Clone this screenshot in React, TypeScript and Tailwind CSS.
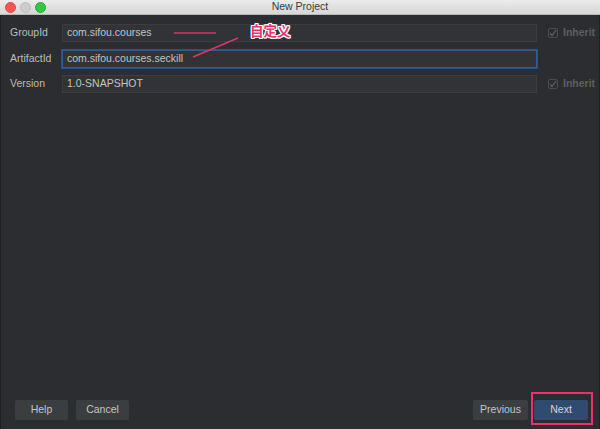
import React from "react";

const font = { fontFamily: '"Liberation Sans", Arial, sans-serif' };

function Row({ label, value, focused, inherit }: { label: string; value: string; focused?: boolean; inherit?: boolean }) {
  return (
    <div className="flex items-center h-[18px]">
      <div className="w-[61px] pl-[9px] text-[10.5px] text-[#bdbdbd]">{label}</div>
      <div
        className={
          "w-[475px] h-[18px] flex items-center pl-[4px] text-[10.5px] text-[#c4c4c4] bg-[#313336] border " +
          (focused ? "border-[#2e5f94] ring-1 ring-[#2a527e]" : "border-[#3b3d40]")
        }
      >
        {value}
      </div>
      {inherit && (
        <div className="flex items-center ml-[11px] gap-[5px]">
          <div className="w-[10px] h-[10px] border border-[#4a4c4f] rounded-[2px] flex items-center justify-center">
            <svg width="8" height="8" viewBox="0 0 8 8">
              <path d="M1 4.2 L3 6.5 L7 1" stroke="#5f6164" strokeWidth="1.2" fill="none" />
            </svg>
          </div>
          <span className="text-[10.5px] font-bold text-[#5d5f62]">Inherit</span>
        </div>
      )}
    </div>
  );
}

export default function App() {
  return (
    <div className="relative w-[600px] h-[429px] flex flex-col bg-[#2b2d30] overflow-hidden" style={font}>
      <div className="relative h-[15px] bg-gradient-to-b from-[#ececec] to-[#d6d6d6] border-b border-[#b9b9b9] flex items-center">
        <div className="absolute left-[5px] top-[2px] flex gap-[4px]">
          <div className="w-[11px] h-[11px] rounded-full bg-[#fc5753] border border-[#df4744]" />
          <div className="w-[11px] h-[11px] rounded-full bg-[#cdcdcd] border border-[#bdbdbd]" />
          <div className="w-[11px] h-[11px] rounded-full bg-[#33c748] border border-[#27aa35]" />
        </div>
        <div className="w-full text-center text-[10.5px] text-[#3a3a3a]">New Project</div>
      </div>
      <div className="flex-1 flex flex-col border-x border-[#1f2022]">
        <div className="flex flex-col gap-[7.5px] pt-[9px]">
          <Row label="GroupId" value="com.sifou.courses" inherit />
          <Row label="ArtifactId" value="com.sifou.courses.seckill" focused />
          <Row label="Version" value="1.0-SNAPSHOT" inherit />
        </div>
        <div className="flex-1" />
        <div className="flex items-center justify-between pl-[14px] pr-[11px] pb-[9px]">
          <div className="flex gap-[8px]">
            <button className="w-[53px] h-[20px] bg-[#3b3e41] rounded-[2px] text-[10.5px] text-[#c4c4c4]">Help</button>
            <button className="w-[53px] h-[20px] bg-[#3b3e41] rounded-[2px] text-[10.5px] text-[#c4c4c4]">Cancel</button>
          </div>
          <div className="flex gap-[6px]">
            <button className="w-[55px] h-[20px] bg-[#3b3e41] rounded-[2px] text-[10.5px] text-[#c4c4c4]">Previous</button>
            <button className="w-[54px] h-[20px] bg-[#2f4c70] rounded-[2px] text-[10.5px] text-[#d6d6d6]">Next</button>
          </div>
        </div>
      </div>
      <div className="absolute left-[531px] top-[392px] w-[62px] h-[33px] border-[2.5px] border-[#e8336d]" />
      <svg className="absolute left-0 top-0" width="600" height="429">
        <line x1="174" y1="33" x2="216" y2="33" stroke="#e2336a" strokeWidth="1.5" />
        <line x1="238" y1="38" x2="193" y2="57" stroke="#e2336a" strokeWidth="1.5" />
      </svg>
      <div
        className="absolute left-[250px] top-[22px] text-[13.5px] font-bold text-[#e8336d]"
        style={{
          fontFamily: '"Noto Sans CJK SC", sans-serif',
          lineHeight: "16px",
          textShadow:
            "1px 0 0 #fff, -1px 0 0 #fff, 0 1px 0 #fff, 0 -1px 0 #fff, 1px 1px 0 #fff, -1px -1px 0 #fff, 1px -1px 0 #fff, -1px 1px 0 #fff",
        }}
      >
        自定义
      </div>
    </div>
  );
}
